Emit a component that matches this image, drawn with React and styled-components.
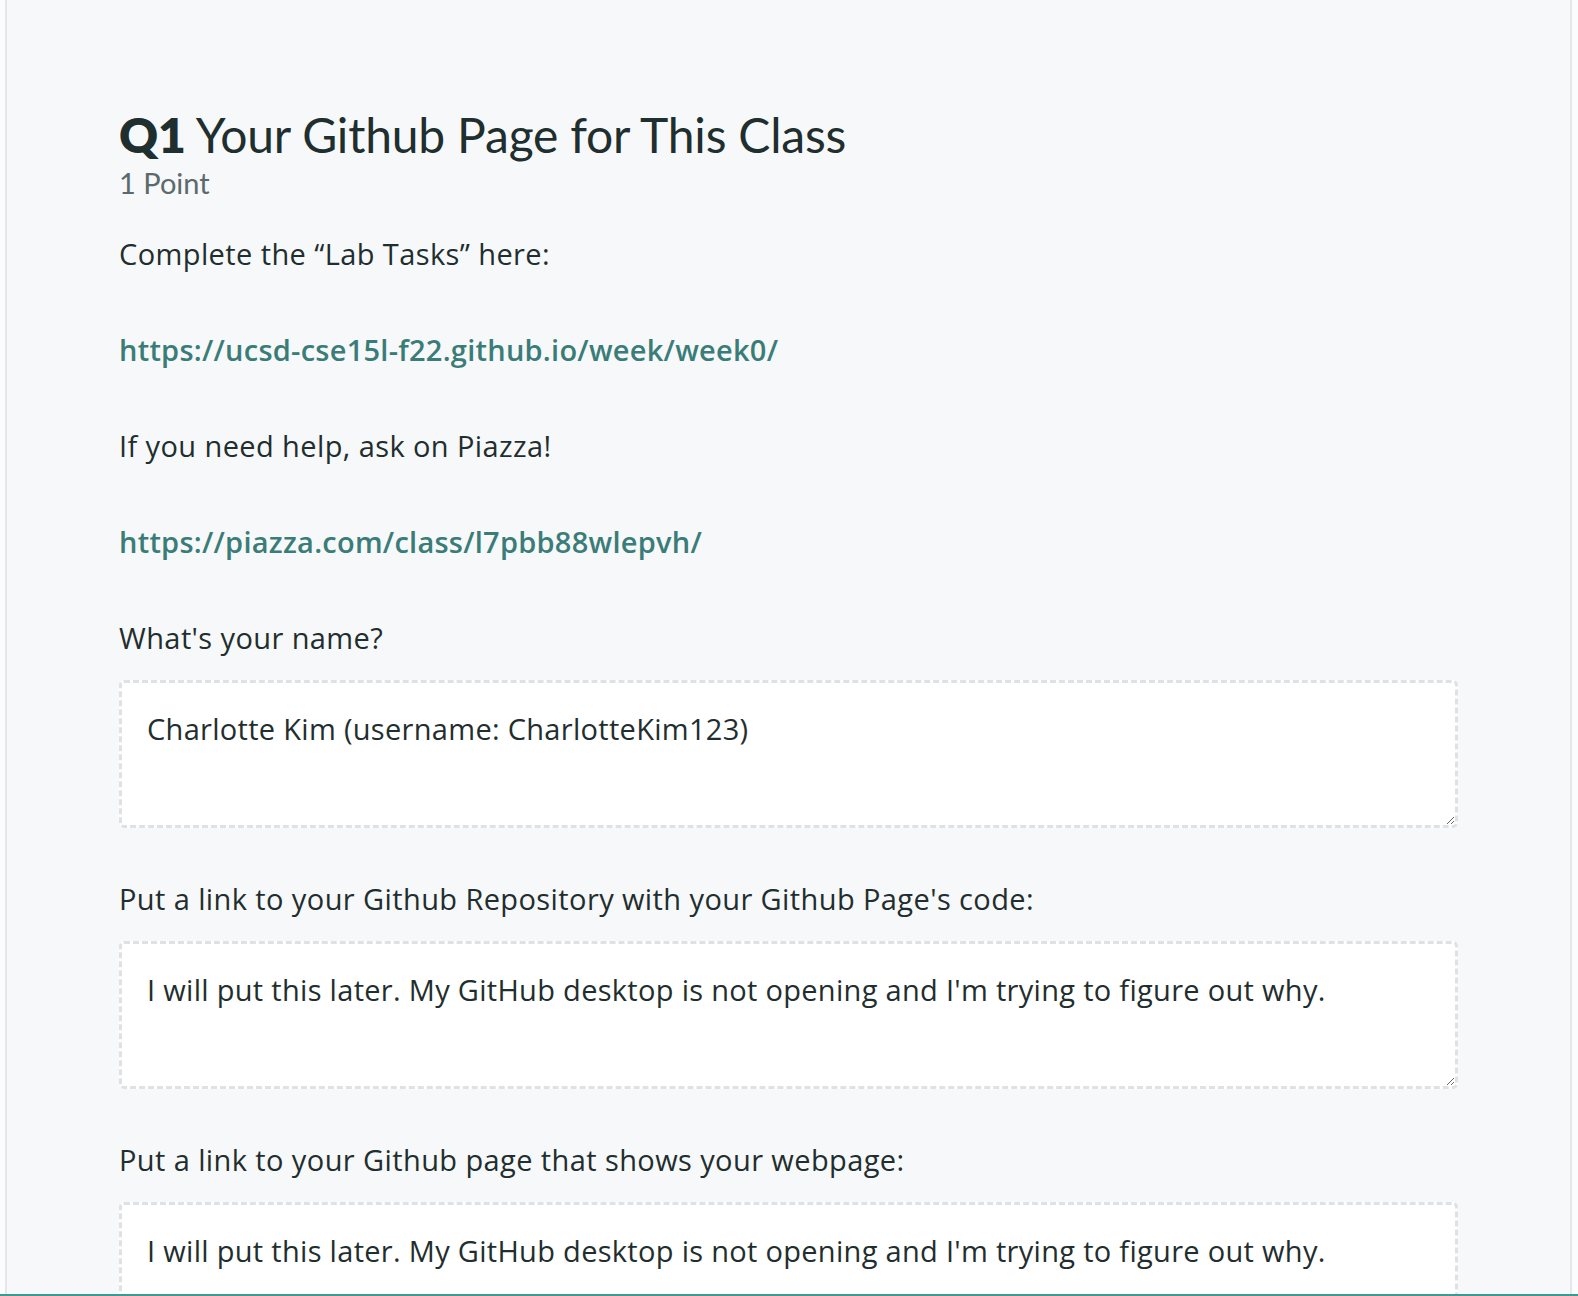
import React from "react";
import styled, { createGlobalStyle } from "styled-components";

const GlobalStyle = createGlobalStyle`
  html, body { margin: 0; padding: 0; }
  body {
    background: #fbfcfd;
    font-family: "Open Sans", Lato, "Noto Sans", sans-serif;
    color: #1f2e2e;
  }
`;

const Outer = styled.div`
  padding: 0 6px 0 5px;
`;

const Panel = styled.main`
  background: #f7f8fa;
  border-left: 2px solid #e4e7eb;
  border-right: 2px solid #e4e7eb;
  padding: 109px 112px 200px 112px;
  min-height: 1296px;
  box-sizing: border-box;
`;

const Title = styled.h1`
  margin: 0;
  font-family: Lato, "Open Sans", sans-serif;
  font-size: 48px;
  font-weight: 400;
  line-height: 52px;
  color: #1f2e2e;
  letter-spacing: -0.2px;
`;

const QNum = styled.span`
  font-weight: 800;
`;

const Points = styled.div`
  margin-top: 4px;
  font-family: Lato, "Open Sans", sans-serif;
  font-size: 29px;
  line-height: 36px;
  color: #5b6a6d;
`;

const Body = styled.div`
  margin-top: 33px;
  font-size: 29px;
  line-height: 40px;
  letter-spacing: 0.4px;
`;

const Para = styled.p`
  margin: 0 0 56px 0;
`;

const Link = styled.a`
  color: #3a7d78;
  font-weight: 600;
  letter-spacing: 0.25px;
  text-decoration: none;
`;

const Label = styled.p`
  margin: 0 0 22px 0;
`;

const Answer = styled.textarea`
  display: block;
  width: 100%;
  box-sizing: border-box;
  height: ${(p) => p.$h}px;
  margin: 0 0 51px 0;
  padding: 26px 25px;
  border: 3px dashed #dfe2e5;
  border-radius: 5px;
  background: #ffffff;
  font-family: inherit;
  font-size: 29px;
  line-height: 40px;
  letter-spacing: 0.3px;
  color: #1f2e2e;
  resize: vertical;
  outline: none;
`;

const BottomBar = styled.div`
  position: fixed;
  left: 0;
  right: 0;
  bottom: 0;
  height: 2px;
  background: #3f9891;
`;

export default function App() {
  return (
    <>
      <GlobalStyle />
      <Outer>
        <Panel>
          <Title>
            <QNum>Q1</QNum> Your Github Page for This Class
          </Title>
          <Points>1 Point</Points>
          <Body>
            <Para>Complete the “Lab Tasks” here:</Para>
            <Para>
              <Link href="#">https://ucsd-cse15l-f22.github.io/week/week0/</Link>
            </Para>
            <Para>If you need help, ask on Piazza!</Para>
            <Para>
              <Link href="#">https://piazza.com/class/l7pbb88wlepvh/</Link>
            </Para>
            <Label>What's your name?</Label>
            <Answer $h={148} readOnly value="Charlotte Kim (username: CharlotteKim123)" />
            <Label>Put a link to your Github Repository with your Github Page's code:</Label>
            <Answer
              $h={148}
              readOnly
              value="I will put this later. My GitHub desktop is not opening and I'm trying to figure out why."
            />
            <Label>Put a link to your Github page that shows your webpage:</Label>
            <Answer
              $h={148}
              readOnly
              value="I will put this later. My GitHub desktop is not opening and I'm trying to figure out why."
            />
          </Body>
        </Panel>
      </Outer>
      <BottomBar />
    </>
  );
}
